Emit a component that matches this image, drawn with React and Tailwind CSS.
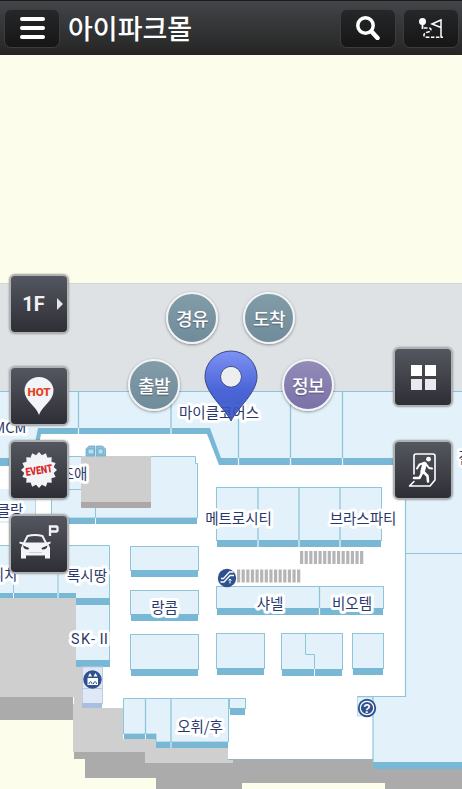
import React from "react";

const EDGE = "#8fc5da";
const FILL = "#e3f2fa";
const BAR = "#79b8d4";

function Shop({ x, y, x2, y2, bar, splits = [] }) {
  return (
    <g>
      <rect x={x + 0.5} y={y + 0.5} width={x2 - x - 1} height={y2 - y} fill={FILL} stroke={EDGE} />
      <rect x={x + 1} y={y2} width={x2 - x - 2} height={bar} fill={BAR} />
      {splits.map((s) => (
        <g key={s}>
          <path d={`M${s} ${y}V${y2}`} stroke={EDGE} strokeWidth="1.3" />
          <path d={`M${s} ${y2}v${bar}`} stroke="#e8f6fc" strokeWidth="1.2" />
        </g>
      ))}
    </g>
  );
}

const labels = [
  ["MCM", 10, 433],
  ["마이클코어스", 219, 418],
  ["즈애", 74, 479],
  ["클랑", 10, 516],
  ["리치", 4, 580],
  ["록시땅", 87, 581],
  ["메트로시티", 238.5, 524],
  ["브라스파티", 363, 524],
  ["랑콤", 164.5, 613],
  ["샤넬", 270, 609],
  ["비오템", 352, 609],
  ["오휘/후", 200, 732],
  ["겔", 465, 463],
];

function Steps({ x, y, n }) {
  return Array.from({ length: n }, (_, i) => (
    <rect key={i} x={x + i * 4.62} y={y} width="3.2" height="13" fill="#b5b5b5" />
  ));
}

function FloorMap() {
  return (
    <svg viewBox="0 55 462 734" className="block h-[734px] w-[462px]">
      <rect y="55" width="462" height="734" fill="#fdfdec" />
      <rect y="283" width="462" height="109" fill="#dfe2e5" />
      <path d="M0 283.5H462" stroke="#d3d6d6" />
      <rect y="392" width="462" height="306" fill={FILL} />
      <path d="M0 391.5H462" stroke={EDGE} />
      <path d="M0 466H34L40 434H209L220 465H405V697H357V716H373V760H228V748H123V709H0Z" fill="#fff" />
      <path d="M0 458H32L38 428H210L221 458H405V465H219L207 434H41L35 466H0Z" fill={BAR} />
      <path d="M78.500 392V428M171 392V428M238.500 392V458M290.500 392V458M342.500 392V458" stroke={EDGE} strokeWidth="1.3" />
      <path d="M78.500 428v6M171 428v6M238.500 458v7M290.500 458v7M342.500 458v7" stroke="#e8f6fc" strokeWidth="1.2" />

      <path d="M0 697H73V708H123V740H156V748H228V759H373V769H462V789H385V783H242V789H156V778H85V759H74V720H0Z" fill="#acabab" />
      <path d="M0 598H76V661H82V708H123V739H156V748H228V759H233V763H145V752H73V704H74V697H0Z" fill="#cfcfcf" />
      <rect x="373" y="697" width="89" height="65" fill={FILL} />
      <rect x="373" y="762" width="89" height="7" fill={BAR} />
      <rect x="357.500" y="697" width="15" height="19" fill={FILL} stroke="#b7dae8" />
      <path d="M405.500 465V696.500H357M373 697V762M405 553.500H462" fill="none" stroke={EDGE} strokeWidth="1.2" />
      <path d="M228 759.500H373" stroke="#92b4c0" />

      <path d="M52 456.500H195.500V463.500H197.500V518H51.500V489.500Z" fill={FILL} stroke={EDGE} />
      <rect x="52" y="518" width="145" height="6" fill={BAR} />
      <path d="M52 489.500H82M95.500 508V518" stroke={EDGE} />
      <path d="M95.500 518v6" stroke="#fff" />
      <rect x="0" y="489" width="36" height="34" fill={FILL} />
      <path d="M35.500 489V523" stroke="#b7dae8" />
      <rect x="81" y="456" width="70" height="52" rx="1.500" fill="#aca8a8" />
      <rect x="81" y="456" width="70" height="46" fill="#cecece" />
      <g fill="#8cc3df" stroke="#5c9fc4" strokeWidth=".7">
        <path d="M86 449l3-3h6v10H86zM96.500 446h6l3 3v7h-9z" />
        <path d="M88 449h6v5h-6zM98 449h5v5h-5z" fill="#b8ddee" />
      </g>

      <path d="M0 545.500H110V598H76V593H0Z" fill={FILL} />
      <path d="M0 545.500H109.500V598M13.500 545V593M58 545V593" fill="none" stroke={EDGE} />
      <path d="M0 593H76V598H110V605H76V598H0Z" fill={BAR} />
      <path d="M13.500 593v5M58 593v5" stroke="#fff" />
      <rect x="76" y="605" width="34" height="55" fill={FILL} />
      <path d="M109.500 605V660" stroke={EDGE} />
      <rect x="76" y="660" width="34" height="7" fill={BAR} />
      <rect x="82.500" y="667" width="20" height="37" fill="#e0e8f5" stroke="#bdcde5" />
      <path d="M83 688.500H102" stroke="#b7c7e0" />
      <rect x="82" y="703" width="20" height="5" fill="#a8bfe0" />

      <Shop x={130} y={546} x2={199} y2={570} bar={7} />
      <Shop x={130} y={590} x2={199} y2={614} bar={7} />
      <Shop x={130} y={634} x2={199} y2={669} bar={7} />
      <Shop x={216} y={487} x2={382} y2={540} bar={7} splits={[258, 299, 340]} />
      <Shop x={216} y={586} x2={384} y2={608} bar={7} splits={[319.500]} />
      <Shop x={216} y={633} x2={265} y2={668} bar={7} />
      <Shop x={281} y={633} x2={343} y2={669} bar={7} />
      <path d="M305.500 634V654.500H314.500V669" fill="none" stroke={EDGE} />
      <path d="M314.500 669v7" stroke="#fff" />
      <Shop x={352} y={633} x2={384} y2={668} bar={7} />

      <path d="M123.500 698.500H228.500V742H156V734H123.500Z" fill={FILL} stroke={EDGE} />
      <path d="M145.500 698V734M171 698V742" stroke={EDGE} strokeWidth="1.3" />
      <path d="M124 734H156V742H228V748H156V739H124Z" fill={BAR} />
      <path d="M145.500 734v5M171 742v6" stroke="#e8f6fc" />
      <Shop x={229} y={698} x2={246} y2={708} bar={7} />

      <Steps x={300} y={551} n={14} />
      <Steps x={237} y={569.500} n={14} />

      <circle cx="227" cy="578" r="9.200" fill="#2f528f" />
      <path d="M220.500 582h3.500l6-6.500h4M221 578.500h2.500l6-6.500h4" fill="none" stroke="#fff" strokeWidth="1.300" />
      <path d="M230 579v4.500M228.500 580.500l1.500-1.500 1.500 1.500" stroke="#fff" fill="none" />
      <circle cx="92.500" cy="679.500" r="9.200" fill="#2f528f" />
      <rect x="87.500" y="678" width="10.500" height="7" fill="#fff" />
      <path d="M88 676.500h4l-2-3.500zM93.500 676.500h4l-2-3.500z" fill="#fff" />
      <path d="M89 684c0-3 3-3 3 0M93.500 684c0-3 3-3 3 0" stroke="#2f528f" fill="none" />
      <circle cx="367" cy="708" r="9.200" fill="#2f528f" />
      <circle cx="367" cy="708" r="6.700" fill="none" stroke="#fff" strokeWidth="1.200" />
      <text x="367" y="712.500" textAnchor="middle" className="fill-white font-['Liberation_Sans',sans-serif] text-[12px] font-bold">?</text>

      {labels.map(([t, x, y]) => (
        <text
          key={t}
          x={x}
          y={y}
          textAnchor="middle"
          stroke="#fff"
          strokeWidth="6"
          strokeLinejoin="round"
          paintOrder="stroke"
          className="fill-[#29386b] font-['Noto_Sans_CJK_KR',sans-serif] text-[14.5px]"
        >
          {t}
        </text>
      ))}
      <text
        x="71"
        y="644"
        textLength="40"
        stroke="#fff"
        strokeWidth="6"
        strokeLinejoin="round"
        paintOrder="stroke"
        className="fill-[#29386b] font-[Roboto,'Noto_Sans_CJK_KR',sans-serif] text-[14.5px]"
      >
        SK-Ⅱ
      </text>
    </svg>
  );
}

function Tile({ children, label }) {
  return (
    <button
      aria-label={label}
      className="flex h-[60px] w-[60px] shrink-0 items-center justify-center rounded-[6px] border-2 border-[#b0b1b3] bg-linear-to-b from-[#555760] to-[#2e2f36] shadow-[0_0_2px_rgba(0,0,0,0.35)]"
    >
      {children}
    </button>
  );
}

function Bubble({ children, className }) {
  return (
    <button
      className={
        "absolute flex h-[52px] w-[52px] items-center justify-center rounded-full border-2 border-[#f1f3f5] text-[18px] font-medium tracking-[-0.5px] text-white shadow-[0_1px_3px_rgba(0,0,0,0.4)] [text-shadow:0_1px_1px_rgba(40,50,60,0.5)] " +
        className
      }
    >
      {children}
    </button>
  );
}

const HEADER_BUTTON =
  "flex h-[39px] w-[56px] items-center justify-center rounded-[7px] border border-[#3b3d3f] bg-linear-to-b from-[#262728] to-[#161617]";

const star = Array.from({ length: 32 }, (_, i) => {
  const r = i % 2 ? 15 : 18;
  const a = (i * Math.PI) / 16 - Math.PI / 2;
  return `${(20 + r * Math.cos(a)).toFixed(2)},${(20 + r * Math.sin(a)).toFixed(2)}`;
}).join(" ");

export default function App() {
  return (
    <div className="flex h-[789px] w-[462px] flex-col overflow-hidden font-['Noto_Sans_CJK_KR',sans-serif]">
      <header className="flex h-[55px] shrink-0 items-center border-t border-[#17191c] bg-linear-to-b from-[#434548] to-[#252525] pl-[4px] pr-[3px]">
        <button aria-label="menu" className={HEADER_BUTTON}>
          <span className="flex w-[25px] flex-col gap-[5px]">
            <i className="h-[4px] rounded-full bg-white" />
            <i className="h-[4px] rounded-full bg-white" />
            <i className="h-[4px] rounded-full bg-white" />
          </span>
        </button>
        <h1 className="ml-[8px] flex-1 whitespace-nowrap pb-[2px] text-[27px] leading-none font-medium text-white">아이파크몰</h1>
        <button aria-label="search" className={HEADER_BUTTON}>
          <svg className="h-6 w-6" viewBox="0 0 24 24" fill="none" stroke="#fff">
            <circle cx="9.500" cy="9.500" r="7.700" strokeWidth="3.500" />
            <path d="M16 16l5.500 6" strokeWidth="4.500" strokeLinecap="round" />
          </svg>
        </button>
        <button aria-label="route" className={HEADER_BUTTON + " ml-[7px]"}>
          <svg className="h-[22px] w-[26px]" viewBox="0 0 26 22" fill="none" stroke="#fff">
            <circle cx="4.500" cy="4.500" r="3.500" fill="#fff" stroke="none" />
            <path d="M4.500 7v5" strokeWidth="1.800" />
            <path d="M23 20.500V3L14 7l9 3.500" strokeWidth="1.500" />
            <path d="M6 11h4c4 0 4 3 0 4-5 1-6 5 0 5.300h15" strokeWidth="1.500" strokeDasharray="3.500 1.500" />
          </svg>
        </button>
      </header>

      <main className="relative h-[734px] shrink-0">
        <FloorMap />

        <Bubble className="left-[166px] top-[237px] bg-linear-to-b from-[#829ca8] to-[#708b9a]">경유</Bubble>
        <Bubble className="left-[243px] top-[237px] bg-linear-to-b from-[#829ca8] to-[#708b9a]">도착</Bubble>
        <Bubble className="left-[128px] top-[304px] bg-linear-to-b from-[#829ca8] to-[#708b9a]">출발</Bubble>
        <Bubble className="left-[282px] top-[304px] bg-linear-to-b from-[#928cb8] to-[#7a71a8]">정보</Bubble>

        <svg className="absolute left-[204px] top-[295px] h-[72px] w-[54px]" viewBox="0 0 54 72">
          <defs>
            <linearGradient id="pin" x1="0" y1="0" x2="0" y2="1">
              <stop offset="0" stopColor="#7d92f4" />
              <stop offset="0.550" stopColor="#4c66d8" />
              <stop offset="1" stopColor="#2745bd" stopOpacity="0.850" />
            </linearGradient>
          </defs>
          <path
            fillRule="evenodd"
            d="M27 71C20 57 1 43 1 26.500a26 25.500 0 0 1 52 0C53 43 34 57 27 71ZM27 16.500a10.300 10.300 0 1 0 0 20.600a10.300 10.300 0 0 0 0-20.600Z"
            fill="url(#pin)"
            stroke="#3c4780"
            strokeWidth="1"
          />
          <circle cx="27" cy="26.800" r="9.800" fill="#eceef0" />
        </svg>

        <nav className="absolute left-[9px] top-[219px] flex flex-col">
          <Tile label="floor">
            <span className="ml-[7px] font-[Roboto,sans-serif] text-[20px] font-bold leading-none text-[#f1f2f6]">1F</span>
            <i className="ml-[12px] h-0 w-0 border-y-[6px] border-l-[6px] border-y-transparent border-l-[#e4e6ee]" />
          </Tile>
          <div className="mt-[32px] flex flex-col gap-[14px]">
            <Tile label="hot">
              <svg className="h-10 w-8" viewBox="0 0 32 40">
                <path d="M16 39C13 30 1.500 25 1.500 14.500a14.500 13.500 0 0 1 29 0C30.500 25 19 30 16 39Z" fill="#f3f4f8" />
                <text x="4.500" y="20" textLength="23" lengthAdjust="spacingAndGlyphs" className="fill-[#e4441f] font-[Roboto,sans-serif] text-[11.5px] font-black">HOT</text>
              </svg>
            </Tile>
            <Tile label="event">
              <svg className="h-10 w-10" viewBox="0 0 40 40">
                <polygon points={star} fill="#f3f4f8" />
                <text x="20" y="24" textAnchor="middle" textLength="27" lengthAdjust="spacingAndGlyphs" transform="rotate(-9 20 20)" className="fill-[#d92525] font-[Roboto,sans-serif] text-[11px] font-black">EVENT</text>
              </svg>
            </Tile>
            <Tile label="parking">
              <svg className="h-[50px] w-[50px] -translate-x-[2px] -translate-y-[2px]" viewBox="0 0 50 50">
                <path d="M38 19V9.500h6.500a1 1 0 0 1 1 1v3a1 1 0 0 1-1 1H38" fill="none" stroke="#f3f4f8" strokeWidth="2.300" />
                <path d="M11.500 27l4-8q7.500-2 15 0l4 8" fill="none" stroke="#f3f4f8" strokeWidth="2" />
                <path d="M7.500 24.500l4 1h23l4-1v2l-2 1q2 3 1.500 6v8h-5v-3H14v3H9v-8q-.500-3 1.500-6l-3-1Z" fill="#f3f4f8" />
                <path d="M11 28.500l6 2.500-.500 1.500q-5 .300-5.500-4ZM35.500 28.500l-6 2.500.500 1.500q5 .300 5.500-4Z" fill="#36373f" />
                <path d="M17 35.500h13" stroke="#c5c7ce" strokeWidth=".8" />
              </svg>
            </Tile>
          </div>
        </nav>

        <nav className="absolute left-[393px] top-[292px] flex flex-col gap-[33px]">
          <Tile label="categories">
            <span className="grid grid-cols-2 gap-[3px]">
              <i className="h-[11px] w-[11px] bg-white" />
              <i className="h-[11px] w-[11px] bg-white" />
              <i className="h-[11px] w-[11px] bg-[#e9e9ef]" />
              <i className="h-[11px] w-[11px] bg-[#e9e9ef]" />
            </span>
          </Tile>
          <Tile label="exit">
            <svg className="h-9 w-8" viewBox="0 0 32 36" fill="none" stroke="#fff" strokeLinecap="round" strokeLinejoin="round">
              <path d="M7 22V4q0-2 2-2h17q2 0 2 2v24l-5 6H2.500l4.500-4.500" strokeWidth="1.600" />
              <circle cx="21.500" cy="7.200" r="2.400" fill="#fff" stroke="none" />
              <path d="M17 11l-4.500 1.500-2.500 4M19 12l3 4 3 .500" strokeWidth="2" />
              <path d="M17.500 12l-2 8" strokeWidth="4.500" />
              <path d="M15 21l-2.500 5H7M16.500 20l4 4 .500 5.500" strokeWidth="2.600" />
            </svg>
          </Tile>
        </nav>
      </main>
    </div>
  );
}
